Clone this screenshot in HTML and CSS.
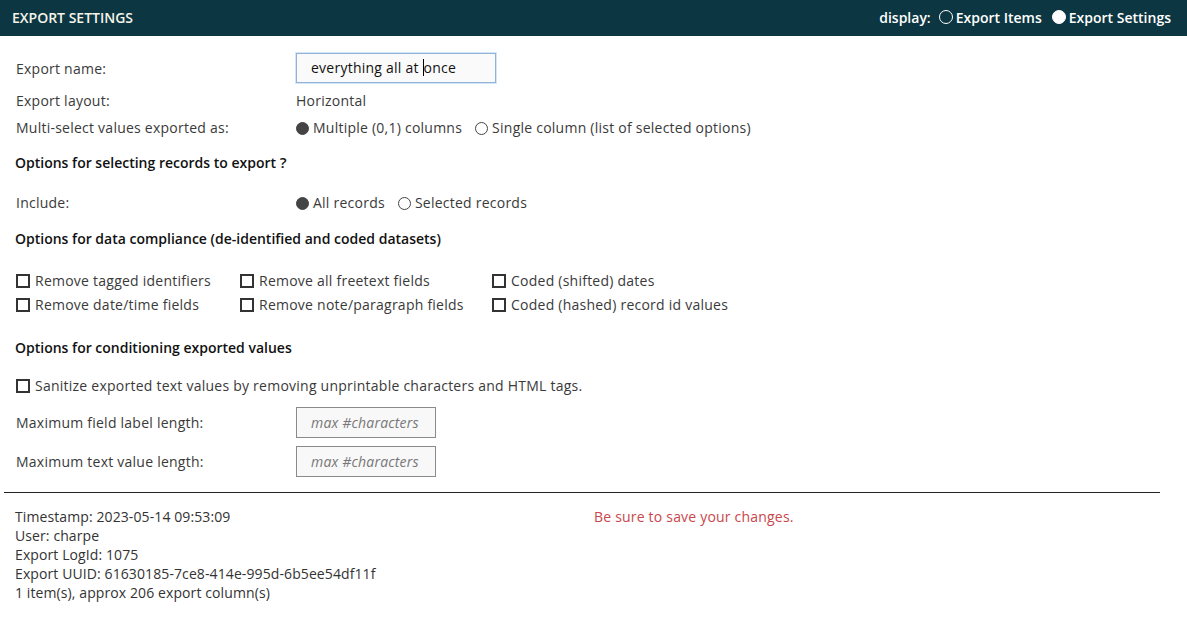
FILE: index.html
```html
<!DOCTYPE html>
<html>
<head>
<meta charset="utf-8">
<link rel="stylesheet" href="styles.css">
</head>
<body>
<div class="topbar">
  <div class="title">EXPORT SETTINGS</div>
  <div class="display">
    <span class="disp-label">display:</span>
    <span class="hradio"></span><span class="opt">Export Items</span>
    <span class="hradio on"></span><span class="opt">Export Settings</span>
  </div>
</div>
<div class="content">
  <div class="row r-name">
    <div class="label">Export name:</div>
    <div class="namebox">everything all at <span class="caret"></span>once</div>
  </div>
  <div class="row r-layout">
    <div class="label">Export layout:</div>
    <div class="value">Horizontal</div>
  </div>
  <div class="row r-multi">
    <div class="label">Multi-select values exported as:</div>
    <div class="value radios">
      <span class="radio on"></span><span class="rtext">Multiple (0,1) columns</span>
      <span class="radio"></span><span class="rtext">Single column (list of selected options)</span>
    </div>
  </div>
  <div class="heading h1">Options for selecting records to export <span class="q">?</span></div>
  <div class="row r-include">
    <div class="label">Include:</div>
    <div class="value radios">
      <span class="radio on"></span><span class="rtext">All records</span>
      <span class="radio"></span><span class="rtext">Selected records</span>
    </div>
  </div>
  <div class="heading h2">Options for data compliance (de-identified and coded datasets)</div>
  <div class="checks">
    <div class="chk"><span class="box"></span>Remove tagged identifiers</div>
    <div class="chk"><span class="box"></span>Remove all freetext fields</div>
    <div class="chk"><span class="box"></span>Coded (shifted) dates</div>
    <div class="chk"><span class="box"></span>Remove date/time fields</div>
    <div class="chk"><span class="box"></span>Remove note/paragraph fields</div>
    <div class="chk"><span class="box"></span>Coded (hashed) record id values</div>
  </div>
  <div class="heading h3">Options for conditioning exported values</div>
  <div class="chk sanitize"><span class="box"></span>Sanitize exported text values by removing unprintable characters and HTML tags.</div>
  <div class="row r-max1">
    <div class="label">Maximum field label length:</div>
    <input class="maxbox" type="text" placeholder="max #characters">
  </div>
  <div class="row r-max2">
    <div class="label">Maximum text value length:</div>
    <input class="maxbox" type="text" placeholder="max #characters">
  </div>
</div>
<div class="rule"></div>
<div class="footer">
  <div class="meta">
    <div>Timestamp: 2023-05-14 09:53:09</div>
    <div>User: charpe</div>
    <div>Export LogId: 1075</div>
    <div>Export UUID: 61630185-7ce8-414e-995d-6b5ee54df11f</div>
    <div>1 item(s), approx 206 export column(s)</div>
  </div>
  <div class="warn">Be sure to save your changes.</div>
</div>
</body>
</html>
```
FILE: styles.css
```css
* { box-sizing: border-box; }
body {
  margin: 0;
  font-family: "Open Sans", "Liberation Sans", sans-serif;
  font-size: 14px;
  letter-spacing: 0.24px;
  color: #3a3a3a;
  background: #fff;
}
.topbar {
  height: 36px;
  background: #0c3641;
  display: flex;
  align-items: center;
  justify-content: space-between;
  padding: 0 16px 2px 12px;
  color: #f4f4ea;
  letter-spacing: 0;
}
.title { font-weight: 600; font-size: 14px; }
.display { display: flex; align-items: center; font-weight: 600; color: #fff; }
.disp-label { margin-right: 8px; }
.hradio {
  width: 14px; height: 14px; border-radius: 50%;
  border: 1px solid #fff; display: inline-block; margin-right: 3px;
}
.hradio.on { background: #fff; margin-left: 10px; }
.content { padding: 0 0 0 16px; }
.row { display: flex; align-items: center; }
.label { width: 280px; flex: none; }
.value { line-height: 20px; }
.r-name { margin-top: 17px; height: 30px; }
.namebox {
  width: 200px; height: 30px;
  border: 1px solid #8fb3d9;
  box-shadow: 0 0 0 1px #d6e6f5;
  background: #fafafa;
  color: #111;
  padding-left: 14px;
  line-height: 28px;
  font-size: 14px;
}
.caret {
  display: inline-block; width: 1px; height: 17px;
  background: #000; vertical-align: middle; margin-top: -3px;
}
.r-layout { margin-top: 8px; line-height: 20px; }
.r-multi { margin-top: 7px; line-height: 20px; }
.radios { display: flex; align-items: center; }
.radio {
  width: 13px; height: 13px; border-radius: 50%;
  border: 1px solid #444; display: inline-block; margin-right: 4px;
}
.radio.on { background: #444; }
.rtext { margin-right: 13px; }
.heading { font-weight: 600; color: #111; line-height: 20px; letter-spacing: 0; }
.q { font-weight: 600; font-size: 15px; margin-left: 0; }
.h1 { margin-top: 14px; margin-left: -1px; }
.r-include { margin-top: 20px; line-height: 20px; }
.h2 { margin-top: 16px; margin-left: -1px; }
.checks {
  margin-top: 22px;
  display: grid;
  grid-template-columns: 224px 252px auto;
  row-gap: 4px;
  width: 780px;
}
.chk { display: flex; align-items: center; line-height: 20px; }
.box {
  width: 14px; height: 14px; border: 2px solid #333;
  display: inline-block; margin-right: 5px; flex: none; background: #fff;
}
.h3 { margin-top: 23px; margin-left: -1px; }
.sanitize { margin-top: 18px; }
.r-max1 { margin-top: 11px; }
.r-max2 { margin-top: 8px; }
.maxbox {
  width: 140px; height: 31px;
  border: 1px solid #8a8a8a;
  background: #f8f8f8;
  font-family: "Open Sans", "Liberation Sans", sans-serif;
  font-size: 14px;
  letter-spacing: 0.2px;
  padding: 0 14px;
  margin: 0;
  outline: none;
}
.maxbox::placeholder { color: #777; font-style: italic; }
.rule { margin: 15px 27px 0 4px; height: 1px; background: #222; }
.footer { display: flex; padding: 14px 0 0 15px; line-height: 19px; color: #333; letter-spacing: 0.1px; }
.meta { width: 579px; }
.warn { color: #c9464c; letter-spacing: 0.2px; }
```
